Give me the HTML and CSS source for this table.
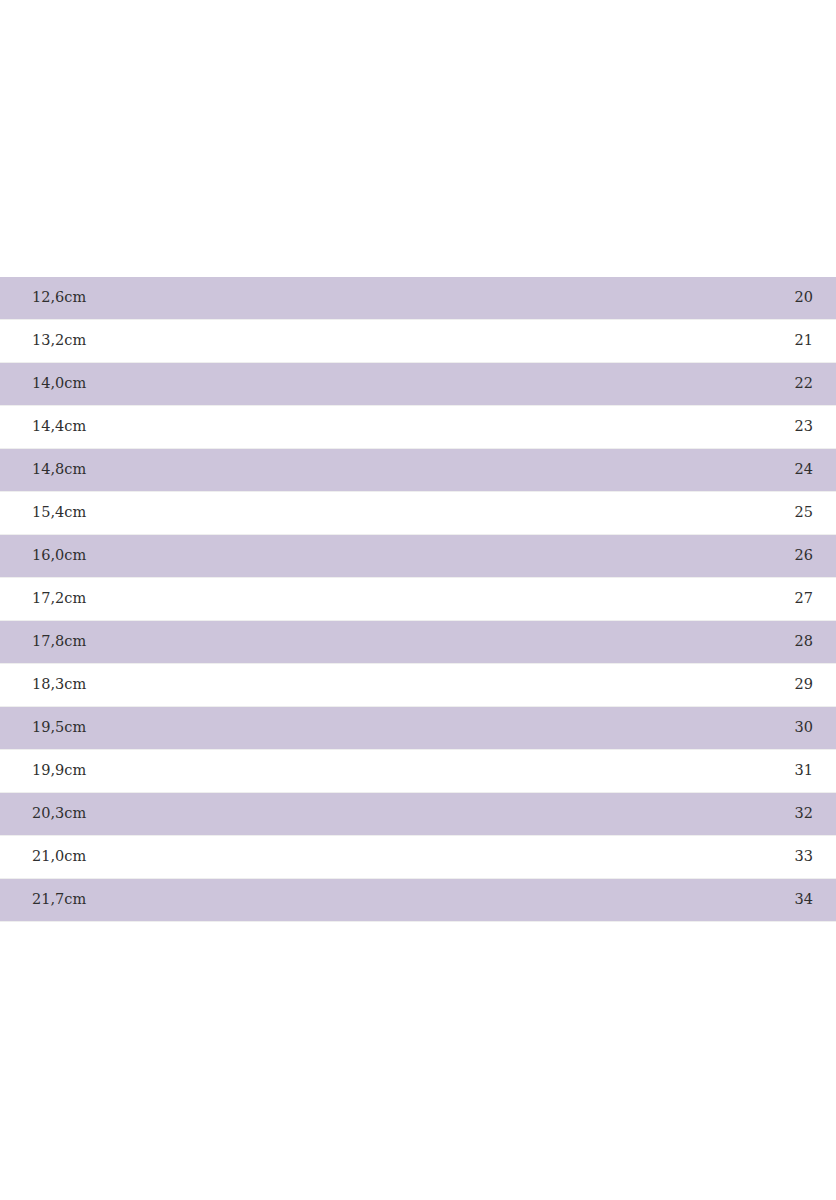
FILE: index.html
```html
<!DOCTYPE html>
<html lang="de">
<head>
<meta charset="utf-8">
<title>Größentabelle</title>
<link rel="stylesheet" href="styles.css">
</head>
<body>
<div class="page">
  <div class="table">
    <div class="row odd"><span>12,6cm</span><span>20</span></div>
    <div class="row"><span>13,2cm</span><span>21</span></div>
    <div class="row odd"><span>14,0cm</span><span>22</span></div>
    <div class="row"><span>14,4cm</span><span>23</span></div>
    <div class="row odd"><span>14,8cm</span><span>24</span></div>
    <div class="row"><span>15,4cm</span><span>25</span></div>
    <div class="row odd"><span>16,0cm</span><span>26</span></div>
    <div class="row"><span>17,2cm</span><span>27</span></div>
    <div class="row odd"><span>17,8cm</span><span>28</span></div>
    <div class="row"><span>18,3cm</span><span>29</span></div>
    <div class="row odd"><span>19,5cm</span><span>30</span></div>
    <div class="row"><span>19,9cm</span><span>31</span></div>
    <div class="row odd"><span>20,3cm</span><span>32</span></div>
    <div class="row"><span>21,0cm</span><span>33</span></div>
    <div class="row odd"><span>21,7cm</span><span>34</span></div>
  </div>
</div>
</body>
</html>
```
FILE: styles.css
```css
html, body {
  margin: 0;
  padding: 0;
  background: #ffffff;
}
.page {
  padding-top: 277px;
  width: 836px;
}
.table {
  display: flex;
  flex-direction: column;
}
.row {
  box-sizing: border-box;
  display: flex;
  justify-content: space-between;
  align-items: center;
  height: 43px;
  border-bottom: 1px solid #eeeeee;
  padding: 0 23px 3px 32px;
  font-family: "DejaVu Serif", "Liberation Serif", serif;
  font-size: 14.5px;
  color: #2f2f2f;
}
.row.odd {
  background: #cdc5db;
}
```
